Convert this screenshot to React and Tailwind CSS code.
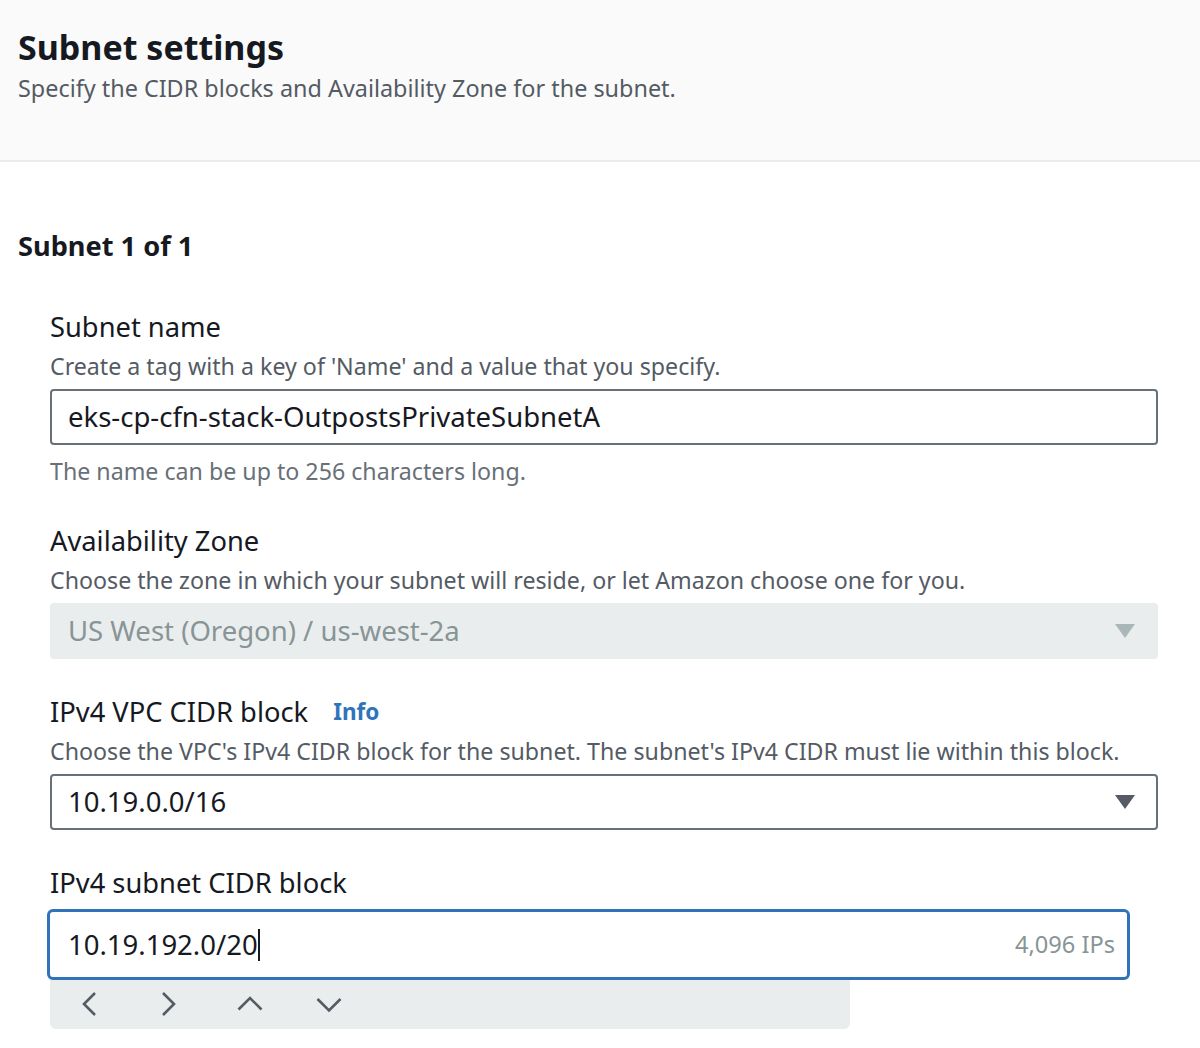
import React from "react";

const Caret = ({ color }) => (
  <svg width="22" height="16" viewBox="0 0 22 16">
    <path d="M1 1h20L11 15z" fill={color} />
  </svg>
);

const Chev = ({ d, className = "" }) => (
  <svg width="26" height="26" viewBox="0 0 26 26" fill="none" className={className}>
    <path d={d} stroke="#545b64" strokeWidth="2.6" strokeLinecap="butt" strokeLinejoin="miter" />
  </svg>
);

function Field({ label, info, desc, children, hint }) {
  return (
    <div className="flex flex-col">
      <div className="flex items-center gap-[25px] text-[27.3px] leading-[40px] text-[#16191f]">
        <span>{label}</span>
        {info && <span className="text-[22.5px] font-bold text-[#2f74bb]">Info</span>}
      </div>
      {desc ? (
        <div className="text-[23.2px] leading-[34px] text-[#545b64] mt-[2px] mb-[6px]">{desc}</div>
      ) : (
        <div className="h-[6px]" />
      )}
      {children}
      {hint && <div className="text-[23.2px] leading-[34px] text-[#687078] mt-[9px]">{hint}</div>}
    </div>
  );
}

export default function App() {
  return (
    <div className="w-[1200px] h-[1048px] bg-white overflow-hidden font-['Noto_Sans',sans-serif]">
      <div className="bg-[#fafafa] border-b-2 border-[#eaeded] h-[162px] px-[18px] pt-[24px]">
        <h1 className="text-[34px] leading-[46px] font-bold text-[#16191f]">Subnet settings</h1>
        <p className="text-[23.4px] leading-[34px] text-[#545b64] mt-[1px]">Specify the CIDR blocks and Availability Zone for the subnet.</p>
      </div>

      <div className="px-[18px] pt-[66px]">
        <h2 className="text-[27.2px] leading-[36px] font-bold text-[#16191f]">Subnet 1 of 1</h2>
      </div>

      <div className="pl-[50px] pr-[42px] pt-[43px] flex flex-col gap-[33px]">
        <Field
          label="Subnet name"
          desc="Create a tag with a key of 'Name' and a value that you specify."
          hint="The name can be up to 256 characters long."
        >
          <div className="h-[56px] border-2 border-[#687078] rounded-[4px] flex items-center px-[16px] text-[27.5px] text-[#16191f]">
            eks-cp-cfn-stack-OutpostsPrivateSubnetA
          </div>
        </Field>

        <Field
          label="Availability Zone"
          desc="Choose the zone in which your subnet will reside, or let Amazon choose one for you."
        >
          <div className="h-[56px] bg-[#eaeded] rounded-[4px] flex items-center justify-between pl-[18px] pr-[22px] text-[27.5px] text-[#879596]">
            <span>US West (Oregon) / us-west-2a</span>
            <Caret color="#aab7b8" />
          </div>
        </Field>

        <Field
          label="IPv4 VPC CIDR block"
          info
          desc="Choose the VPC's IPv4 CIDR block for the subnet. The subnet's IPv4 CIDR must lie within this block."
        >
          <div className="h-[56px] border-2 border-[#687078] rounded-[4px] flex items-center justify-between pl-[16px] pr-[20px] text-[27.5px] text-[#16191f]">
            <span>10.19.0.0/16</span>
            <Caret color="#545b64" />
          </div>
        </Field>

        <Field label="IPv4 subnet CIDR block">
          <div className="-ml-[3px] mr-[28px] h-[71px] border-[3px] border-[#3173b8] rounded-[6px] flex items-center justify-between pl-[18px] pr-[12px] relative z-10 bg-white">
            <span className="text-[27.5px] text-[#16191f] flex items-center">
              10.19.192.0/20
              <span className="inline-block w-[2px] h-[32px] bg-[#16191f]" />
            </span>
            <span className="text-[23.6px] text-[#879596]">4,096 IPs</span>
          </div>
          <div className="w-[800px] h-[50px] bg-[#eaeded] rounded-b-[6px] flex items-center pl-[27px] -mt-[1px]">
            <Chev d="M18 2L7 13l11 11" />
            <Chev d="M8 2l11 11L8 24" className="ml-[52px]" />
            <Chev d="M1.5 18.5L13 7l11.5 11.5" className="ml-[56px]" />
            <Chev d="M1.5 8L13 19.5 24.5 8" className="ml-[53px]" />
          </div>
        </Field>
      </div>
    </div>
  );
}
